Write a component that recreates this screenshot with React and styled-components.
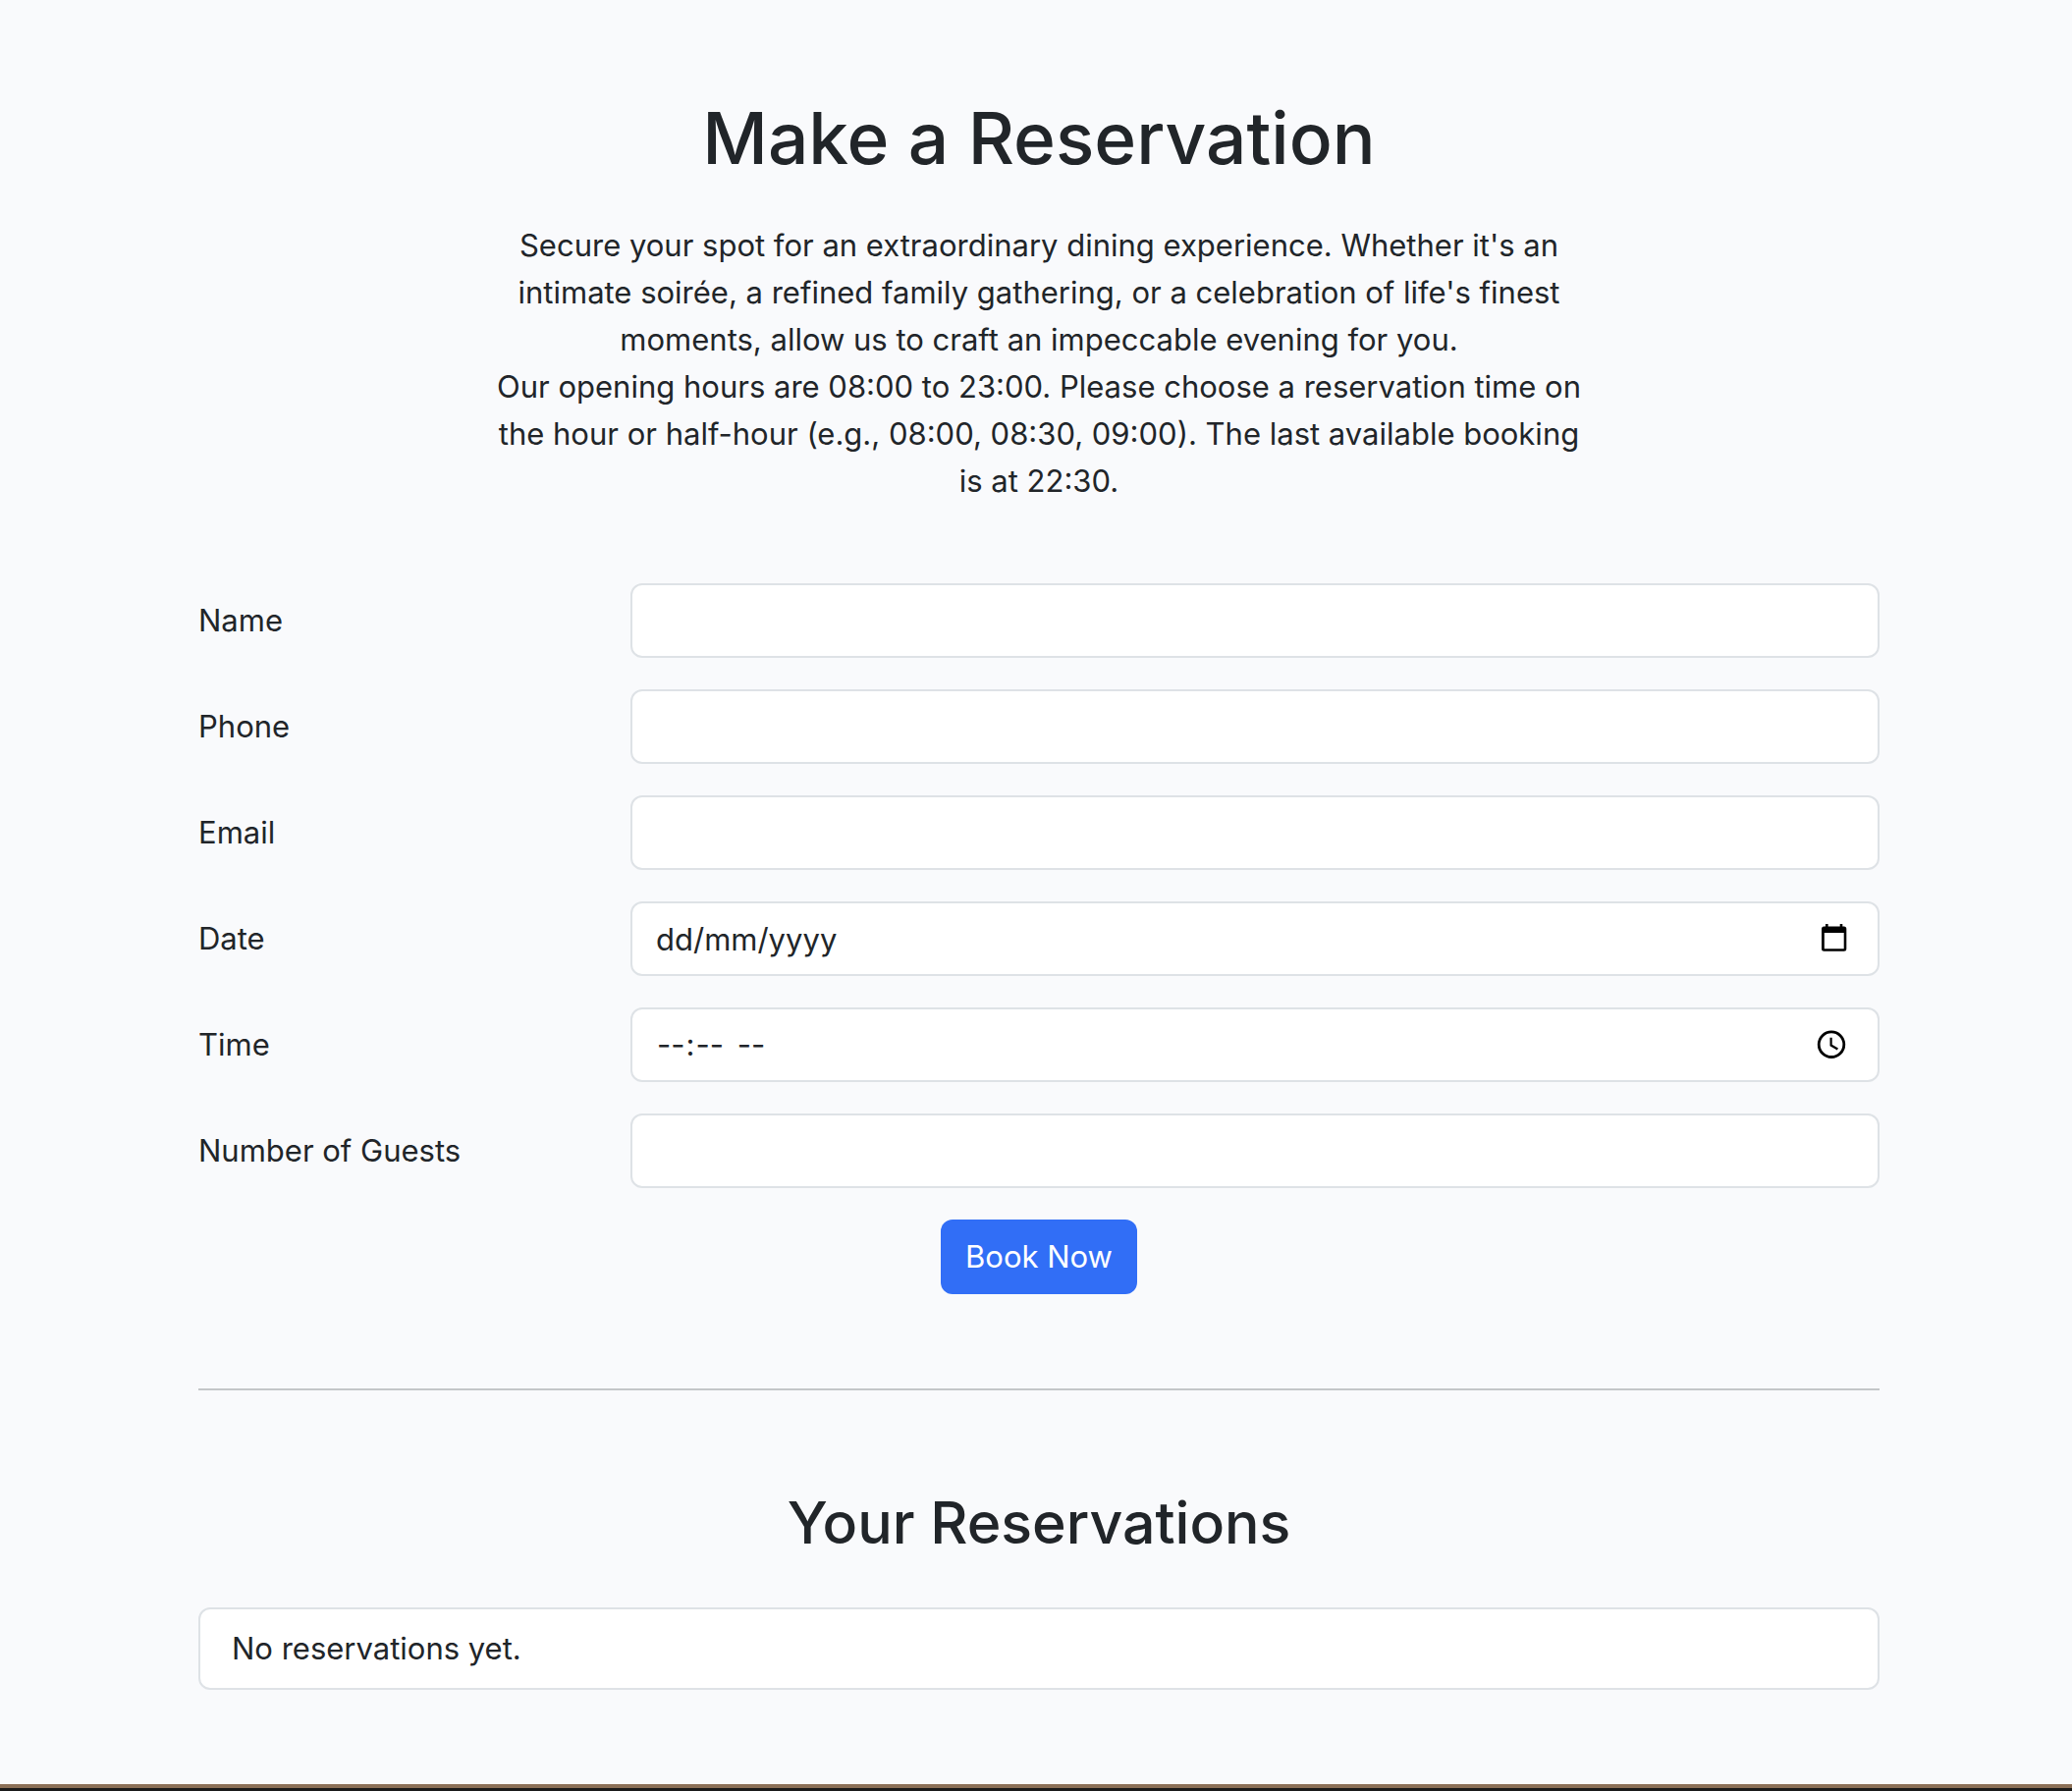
import React from "react";
import styled, { createGlobalStyle } from "styled-components";

const GlobalStyle = createGlobalStyle`
  *, *::before, *::after { box-sizing: border-box; }
  body {
    margin: 0;
    background: #f9fafc;
    color: #212529;
    font-family: Inter, "Liberation Sans", sans-serif;
    font-size: 31px;
    line-height: 48px;
  }
`;

const Page = styled.main`
  padding: 96px 196px 96px 202px;
`;

const Title = styled.h1`
  margin: 0 0 40px;
  font-size: 73px;
  line-height: 90px;
  font-weight: 500;
  text-align: center;
`;

const Subtitle = styled.h2`
  margin: 0 0 48px;
  font-size: 59px;
  line-height: 77px;
  font-weight: 500;
  text-align: center;
`;

const Intro = styled.p`
  margin: 0 0 80px;
  text-align: center;
`;

const Form = styled.form`
  display: grid;
  gap: 32px;
`;

const Row = styled.div`
  display: grid;
  grid-template-columns: repeat(12, minmax(0, 1fr));
  column-gap: 48px;
  align-items: center;
`;

const Label = styled.label`
  grid-column: span 3;
`;

const Field = styled.div`
  position: relative;
  grid-column: span 9;
`;

const Input = styled.input`
  display: block;
  width: 100%;
  height: 76px;
  padding: 12px 24px;
  border: 2px solid #dee2e6;
  border-radius: 12px;
  background: #fff;
  color: inherit;
  font: inherit;
  appearance: none;

  &::placeholder { color: inherit; opacity: 1; }
  &::-webkit-calendar-picker-indicator { opacity: 0; }
  &::-webkit-datetime-edit-ampm-field { margin-left: 6px; }
`;

const FieldIcon = styled.svg`
  position: absolute;
  top: 20px;
  right: 32px;
  width: 32px;
  height: 32px;
  pointer-events: none;
`;

const SubmitButton = styled.button`
  justify-self: center;
  height: 76px;
  padding: 12px 25px;
  border: 0;
  border-radius: 12px;
  background: #316ef6;
  color: #fff;
  font: inherit;
`;

const Divider = styled.hr`
  height: 2px;
  margin: 96px 0;
  border: 0;
  background: #c4c6c8;
`;

const List = styled.ul`
  margin: 0;
  padding: 0;
  list-style: none;
  border: 2px solid #dee2e6;
  border-radius: 12px;
  background: #fff;
`;

const ListItem = styled.li`
  padding: 16px 32px;
`;

const Footer = styled.footer`
  height: 7px;
  border-top: 4px solid #8b6f56;
  background: #1a1a1a;
`;

const CalendarIcon = () => (
  <FieldIcon viewBox="0 0 32 32" aria-hidden="true">
    <path
      fillRule="evenodd"
      d="M9 3h2.600v2.500h12.100V3h2.600v2.500h1.500a2.500 2.500 0 0 1 2.500 2.500v20.200a2.500 2.500 0 0 1-2.500 2.500h-20.300a2.500 2.500 0 0 1-2.500-2.500v-20.200a2.500 2.500 0 0 1 2.500-2.500h1.500zM7.800 12v16.300h19.900V12z"
    />
  </FieldIcon>
);

const ClockIcon = () => (
  <FieldIcon viewBox="0 0 32 32" aria-hidden="true" fill="none" stroke="#000">
    <circle cx="15" cy="17.700" r="12.800" strokeWidth="2.800" />
    <path d="M14.600 10.700v7.800l6.800 4" strokeWidth="2.200" />
  </FieldIcon>
);

const fields = [
  { id: "name", label: "Name", type: "text" },
  { id: "phone", label: "Phone", type: "tel" },
  { id: "email", label: "Email", type: "email" },
  { id: "date", label: "Date", type: "text", placeholder: "dd/mm/yyyy", Icon: CalendarIcon },
  { id: "time", label: "Time", type: "time", Icon: ClockIcon },
  { id: "guests", label: "Number of Guests", type: "number" },
];

export default function App() {
  return (
    <>
      <GlobalStyle />
      <Page>
        <Title>Make a Reservation</Title>
        <Intro>
          Secure your spot for an extraordinary dining experience. Whether it's an
          <br />
          intimate soirée, a refined family gathering, or a celebration of life's finest
          <br />
          moments, allow us to craft an impeccable evening for you.
          <br />
          Our opening hours are 08:00 to 23:00. Please choose a reservation time on
          <br />
          the hour or half-hour (e.g., 08:00, 08:30, 09:00). The last available booking
          <br />
          is at 22:30.
        </Intro>
        <Form onSubmit={(e) => e.preventDefault()}>
          {fields.map(({ id, label, type, placeholder, Icon }) => (
            <Row key={id}>
              <Label htmlFor={id}>{label}</Label>
              <Field>
                <Input id={id} name={id} type={type} placeholder={placeholder} />
                {Icon && <Icon />}
              </Field>
            </Row>
          ))}
          <SubmitButton type="submit">Book Now</SubmitButton>
        </Form>
        <Divider />
        <Subtitle>Your Reservations</Subtitle>
        <List>
          <ListItem>No reservations yet.</ListItem>
        </List>
      </Page>
      <Footer />
    </>
  );
}
